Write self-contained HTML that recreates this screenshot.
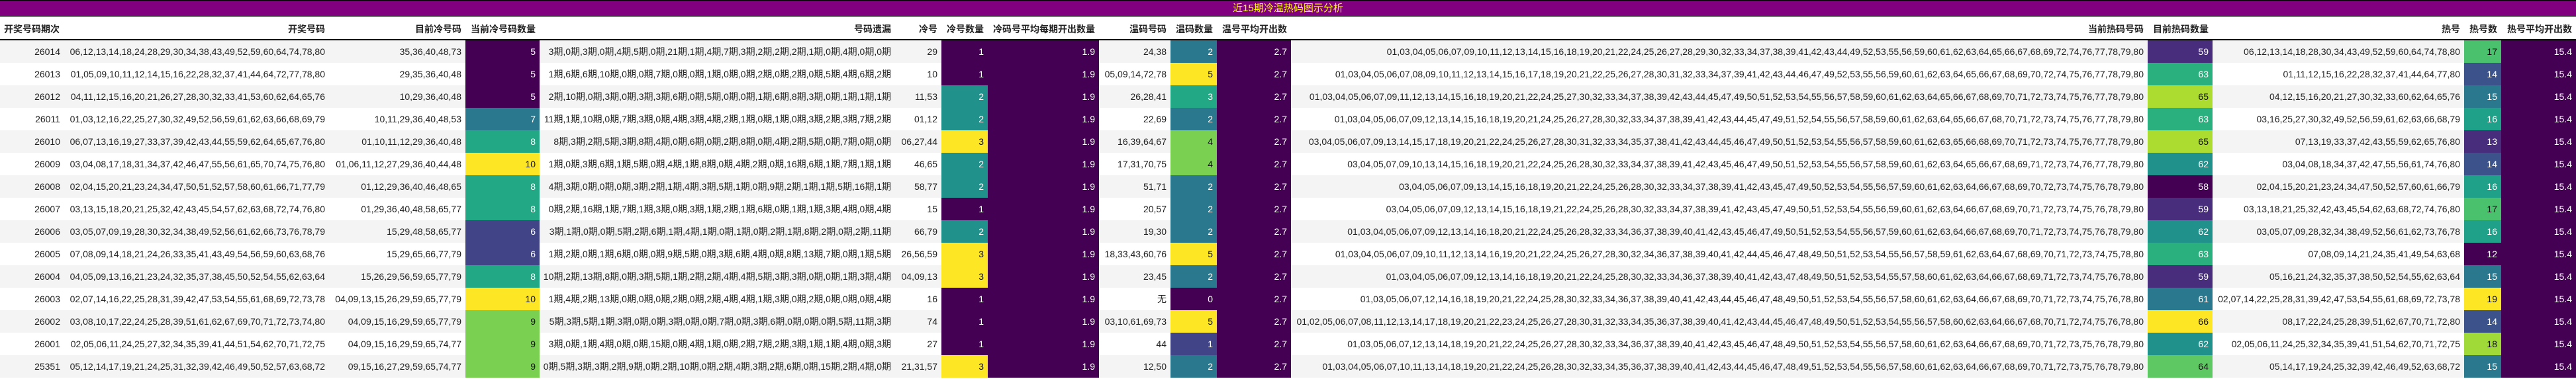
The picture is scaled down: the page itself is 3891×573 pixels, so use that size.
<!DOCTYPE html>
<html><head><meta charset="utf-8">
<style>
*{margin:0;padding:0;box-sizing:border-box}
body{width:3891px;height:573px;background:#fff;font-family:"Liberation Sans","Noto Sans CJK SC",sans-serif;font-size:14px;color:#222;overflow:hidden}
.t{height:25px;background:#800080;border-top:1px solid #000;border-bottom:1px solid #000;color:#ffff00;text-align:center;font-size:15px;line-height:23px}
.g{display:grid;grid-template-columns:97px 400px 206px 112px 537px 70px 70px 168px 108px 70px 112px 1294px 98px 380px 56px 113px}
.g>div{text-align:right;padding-right:6px;white-space:nowrap;overflow:visible}
.h{height:36px;border-bottom:2px solid #000}
.h>div{font-weight:bold;line-height:38px}
.h>div:first-child{text-align:left;padding-left:6px}
.r{height:34px}
.r>div{line-height:34px}
.r:nth-of-type(odd){background:#f4f4f4}
.r:nth-of-type(even){background:#fff}
.a{background:#440154;color:#fff}
.b{background:#414487;color:#fff}
.b2{background:#472d7b;color:#fff}
.c{background:#3b528b;color:#fff}
.d{background:#2a788e;color:#fff}
.e{background:#21918c;color:#fff}
.f{background:#22a884;color:#fff}
.f2{background:#2ab07f;color:#fff}
.f3{background:#1fa088;color:#fff}
.gg{background:#4ac16d;color:#111}
.h5{background:#5ec962;color:#111}
.i{background:#7ad151;color:#111}
.j{background:#a0da39;color:#111}
.k{background:#addc30;color:#111}
.y{background:#fde725;color:#111}
</style></head><body>
<div class="t">近15期冷温热码图示分析</div>
<div class="g h"><div>开奖号码期次</div><div>开奖号码</div><div>目前冷号码</div><div>当前冷号码数量</div><div>号码遗漏</div><div>冷号</div><div>冷号数量</div><div>冷码号平均每期开出数量</div><div>温码号码</div><div>温码数量</div><div>温号平均开出数</div><div>当前热码号码</div><div>目前热码数量</div><div>热号</div><div>热号数</div><div>热号平均开出数</div></div>
<div id="rows">
<div class="g r"><div>26014</div><div>06,12,13,14,18,24,28,29,30,34,38,43,49,52,59,60,64,74,78,80</div><div>35,36,40,48,73</div><div class="a">5</div><div>3期,0期,3期,0期,4期,5期,0期,21期,1期,4期,7期,3期,2期,2期,2期,1期,0期,4期,0期,0期</div><div>29</div><div class="a">1</div><div class="a">1.9</div><div>24,38</div><div class="d">2</div><div class="a">2.7</div><div>01,03,04,05,06,07,09,10,11,12,13,14,15,16,18,19,20,21,22,24,25,26,27,28,29,30,32,33,34,37,38,39,41,42,43,44,49,52,53,55,56,59,60,61,62,63,64,65,66,67,68,69,72,74,76,77,78,79,80</div><div class="b2">59</div><div>06,12,13,14,18,28,30,34,43,49,52,59,60,64,74,78,80</div><div class="gg">17</div><div class="a">15.4</div></div>
<div class="g r"><div>26013</div><div>01,05,09,10,11,12,14,15,16,22,28,32,37,41,44,64,72,77,78,80</div><div>29,35,36,40,48</div><div class="a">5</div><div>1期,6期,6期,10期,0期,0期,7期,0期,0期,1期,0期,0期,2期,0期,2期,0期,5期,4期,6期,2期</div><div>10</div><div class="a">1</div><div class="a">1.9</div><div>05,09,14,72,78</div><div class="y">5</div><div class="a">2.7</div><div>01,03,04,05,06,07,08,09,10,11,12,13,14,15,16,17,18,19,20,21,22,25,26,27,28,30,31,32,33,34,37,39,41,42,43,44,46,47,49,52,53,55,56,59,60,61,62,63,64,65,66,67,68,69,70,72,74,75,76,77,78,79,80</div><div class="f2">63</div><div>01,11,12,15,16,22,28,32,37,41,44,64,77,80</div><div class="c">14</div><div class="a">15.4</div></div>
<div class="g r"><div>26012</div><div>04,11,12,15,16,20,21,26,27,28,30,32,33,41,53,60,62,64,65,76</div><div>10,29,36,40,48</div><div class="a">5</div><div>2期,10期,0期,3期,0期,3期,3期,6期,0期,5期,0期,0期,1期,6期,8期,3期,0期,1期,1期,1期</div><div>11,53</div><div class="e">2</div><div class="a">1.9</div><div>26,28,41</div><div class="f">3</div><div class="a">2.7</div><div>01,03,04,05,06,07,09,11,12,13,14,15,16,18,19,20,21,22,24,25,27,30,32,33,34,37,38,39,42,43,44,45,47,49,50,51,52,53,54,55,56,57,58,59,60,61,62,63,64,65,66,67,68,69,70,71,72,73,74,75,76,77,78,79,80</div><div class="k">65</div><div>04,12,15,16,20,21,27,30,32,33,60,62,64,65,76</div><div class="d">15</div><div class="a">15.4</div></div>
<div class="g r"><div>26011</div><div>01,03,12,16,22,25,27,30,32,49,52,56,59,61,62,63,66,68,69,79</div><div>10,11,29,36,40,48,53</div><div class="d">7</div><div>11期,1期,10期,0期,7期,3期,0期,4期,3期,4期,2期,1期,0期,1期,0期,3期,2期,3期,7期,2期</div><div>01,12</div><div class="e">2</div><div class="a">1.9</div><div>22,69</div><div class="d">2</div><div class="a">2.7</div><div>01,03,04,05,06,07,09,12,13,14,15,16,18,19,20,21,24,25,26,27,28,30,32,33,34,37,38,39,41,42,43,44,45,47,49,51,52,54,55,56,57,58,59,60,61,62,63,64,65,66,67,68,70,71,72,73,74,75,76,77,78,79,80</div><div class="f2">63</div><div>03,16,25,27,30,32,49,52,56,59,61,62,63,66,68,79</div><div class="f3">16</div><div class="a">15.4</div></div>
<div class="g r"><div>26010</div><div>06,07,13,16,19,27,33,37,39,42,43,44,55,59,62,64,65,67,76,80</div><div>01,10,11,12,29,36,40,48</div><div class="f">8</div><div>8期,3期,2期,5期,3期,8期,4期,0期,6期,0期,2期,8期,0期,4期,2期,5期,0期,7期,0期,0期</div><div>06,27,44</div><div class="y">3</div><div class="a">1.9</div><div>16,39,64,67</div><div class="i">4</div><div class="a">2.7</div><div>03,04,05,06,07,09,13,14,15,17,18,19,20,21,22,24,25,26,27,28,30,31,32,33,34,35,37,38,41,42,43,44,45,46,47,49,50,51,52,53,54,55,56,57,58,59,60,61,62,63,65,66,68,69,70,71,72,73,74,75,76,77,78,79,80</div><div class="k">65</div><div>07,13,19,33,37,42,43,55,59,62,65,76,80</div><div class="b2">13</div><div class="a">15.4</div></div>
<div class="g r"><div>26009</div><div>03,04,08,17,18,31,34,37,42,46,47,55,56,61,65,70,74,75,76,80</div><div>01,06,11,12,27,29,36,40,44,48</div><div class="y">10</div><div>1期,0期,3期,6期,1期,5期,0期,4期,1期,8期,0期,4期,2期,0期,16期,6期,1期,7期,1期,1期</div><div>46,65</div><div class="e">2</div><div class="a">1.9</div><div>17,31,70,75</div><div class="i">4</div><div class="a">2.7</div><div>03,04,05,07,09,10,13,14,15,16,18,19,20,21,22,24,25,26,28,30,32,33,34,37,38,39,41,42,43,45,46,47,49,50,51,52,53,54,55,56,57,58,59,60,61,62,63,64,65,66,67,68,69,71,72,73,74,76,77,78,79,80</div><div class="e">62</div><div>03,04,08,18,34,37,42,47,55,56,61,74,76,80</div><div class="c">14</div><div class="a">15.4</div></div>
<div class="g r"><div>26008</div><div>02,04,15,20,21,23,24,34,47,50,51,52,57,58,60,61,66,71,77,79</div><div>01,12,29,36,40,46,48,65</div><div class="f">8</div><div>4期,3期,0期,0期,0期,3期,2期,1期,4期,3期,5期,1期,0期,9期,2期,1期,1期,5期,16期,1期</div><div>58,77</div><div class="e">2</div><div class="a">1.9</div><div>51,71</div><div class="d">2</div><div class="a">2.7</div><div>03,04,05,06,07,09,13,14,15,16,18,19,20,21,22,24,25,26,28,30,32,33,34,37,38,39,41,42,43,45,47,49,50,52,53,54,55,56,57,59,60,61,62,63,64,66,67,68,69,70,72,73,74,75,76,78,79,80</div><div class="a">58</div><div>02,04,15,20,21,23,24,34,47,50,52,57,60,61,66,79</div><div class="f3">16</div><div class="a">15.4</div></div>
<div class="g r"><div>26007</div><div>03,13,15,18,20,21,25,32,42,43,45,54,57,62,63,68,72,74,76,80</div><div>01,29,36,40,48,58,65,77</div><div class="f">8</div><div>0期,2期,16期,1期,7期,1期,3期,0期,3期,1期,2期,1期,6期,0期,1期,1期,3期,4期,0期,4期</div><div>15</div><div class="a">1</div><div class="a">1.9</div><div>20,57</div><div class="d">2</div><div class="a">2.7</div><div>03,04,05,06,07,09,12,13,14,15,16,18,19,21,22,24,25,26,28,30,32,33,34,37,38,39,41,42,43,45,47,49,50,51,52,53,54,55,56,59,60,61,62,63,64,66,67,68,69,70,71,72,73,74,75,76,78,79,80</div><div class="b2">59</div><div>03,13,18,21,25,32,42,43,45,54,62,63,68,72,74,76,80</div><div class="gg">17</div><div class="a">15.4</div></div>
<div class="g r"><div>26006</div><div>03,05,07,09,19,28,30,32,34,38,49,52,56,61,62,66,73,76,78,79</div><div>15,29,48,58,65,77</div><div class="b">6</div><div>3期,1期,0期,0期,5期,2期,6期,1期,4期,1期,0期,1期,0期,2期,1期,8期,2期,0期,2期,11期</div><div>66,79</div><div class="e">2</div><div class="a">1.9</div><div>19,30</div><div class="d">2</div><div class="a">2.7</div><div>01,03,04,05,06,07,09,12,13,14,16,18,20,21,22,24,25,26,28,32,33,34,36,37,38,39,40,41,42,43,45,46,47,49,50,51,52,53,54,55,56,57,59,60,61,62,63,64,66,67,68,69,70,71,72,73,74,75,76,78,79,80</div><div class="e">62</div><div>03,05,07,09,28,32,34,38,49,52,56,61,62,73,76,78</div><div class="f3">16</div><div class="a">15.4</div></div>
<div class="g r"><div>26005</div><div>07,08,09,14,18,21,24,26,33,35,41,43,49,54,56,59,60,63,68,76</div><div>15,29,65,66,77,79</div><div class="b">6</div><div>1期,2期,0期,1期,6期,0期,0期,9期,5期,0期,3期,6期,4期,0期,8期,13期,7期,0期,1期,5期</div><div>26,56,59</div><div class="y">3</div><div class="a">1.9</div><div>18,33,43,60,76</div><div class="y">5</div><div class="a">2.7</div><div>01,03,04,05,06,07,09,10,11,12,13,14,16,19,20,21,22,24,25,26,27,28,30,32,34,36,37,38,39,40,41,42,44,45,46,47,48,49,50,51,52,53,54,55,56,57,58,59,61,62,63,64,67,68,69,70,71,72,73,74,75,78,80</div><div class="f2">63</div><div>07,08,09,14,21,24,35,41,49,54,63,68</div><div class="a">12</div><div class="a">15.4</div></div>
<div class="g r"><div>26004</div><div>04,05,09,13,16,21,23,24,32,35,37,38,45,50,52,54,55,62,63,64</div><div>15,26,29,56,59,65,77,79</div><div class="f">8</div><div>10期,2期,13期,8期,0期,3期,5期,1期,2期,2期,4期,4期,5期,3期,3期,0期,0期,1期,3期,4期</div><div>04,09,13</div><div class="y">3</div><div class="a">1.9</div><div>23,45</div><div class="d">2</div><div class="a">2.7</div><div>01,03,04,05,06,07,09,12,13,14,16,18,19,20,21,22,24,25,28,30,32,33,34,36,37,38,39,40,41,42,43,47,48,49,50,51,52,53,54,55,57,58,60,61,62,63,64,66,67,68,69,71,72,73,74,75,76,78,80</div><div class="b2">59</div><div>05,16,21,24,32,35,37,38,50,52,54,55,62,63,64</div><div class="d">15</div><div class="a">15.4</div></div>
<div class="g r"><div>26003</div><div>02,07,14,16,22,25,28,31,39,42,47,53,54,55,61,68,69,72,73,78</div><div>04,09,13,15,26,29,59,65,77,79</div><div class="y">10</div><div>1期,4期,2期,13期,0期,0期,0期,2期,0期,2期,4期,4期,1期,3期,0期,2期,0期,0期,0期,4期</div><div>16</div><div class="a">1</div><div class="a">1.9</div><div>无</div><div class="a">0</div><div class="a">2.7</div><div>01,03,05,06,07,12,14,16,18,19,20,21,22,24,25,28,30,32,33,34,36,37,38,39,40,41,42,43,44,45,46,47,48,49,50,51,52,53,54,55,56,57,58,60,61,62,63,64,66,67,68,69,70,71,72,73,74,75,76,78,80</div><div class="d">61</div><div>02,07,14,22,25,28,31,39,42,47,53,54,55,61,68,69,72,73,78</div><div class="y">19</div><div class="a">15.4</div></div>
<div class="g r"><div>26002</div><div>03,08,10,17,22,24,25,28,39,51,61,62,67,69,70,71,72,73,74,80</div><div>04,09,15,16,29,59,65,77,79</div><div class="i">9</div><div>5期,3期,5期,1期,3期,0期,0期,3期,0期,0期,7期,0期,3期,6期,0期,0期,0期,5期,11期,3期</div><div>74</div><div class="a">1</div><div class="a">1.9</div><div>03,10,61,69,73</div><div class="y">5</div><div class="a">2.7</div><div>01,02,05,06,07,08,11,12,13,14,17,18,19,20,21,22,23,24,25,26,27,28,30,31,32,33,34,35,36,37,38,39,40,41,42,43,44,45,46,47,48,49,50,51,52,53,54,55,56,57,58,60,62,63,64,66,67,68,70,71,72,74,75,76,78,80</div><div class="y">66</div><div>08,17,22,24,25,28,39,51,62,67,70,71,72,80</div><div class="c">14</div><div class="a">15.4</div></div>
<div class="g r"><div>26001</div><div>02,05,06,11,24,25,27,32,34,35,39,41,44,51,54,62,70,71,72,75</div><div>04,09,15,16,29,59,65,74,77</div><div class="i">9</div><div>3期,0期,1期,4期,0期,0期,15期,0期,4期,1期,0期,2期,7期,2期,3期,1期,1期,4期,0期,3期</div><div>27</div><div class="a">1</div><div class="a">1.9</div><div>44</div><div class="b">1</div><div class="a">2.7</div><div>01,03,05,06,07,12,13,14,18,19,20,21,22,24,25,26,27,28,30,32,33,34,36,37,38,39,40,41,42,43,45,46,47,48,49,50,51,52,53,54,55,56,57,58,60,61,62,63,64,66,67,68,69,70,71,72,73,75,76,78,79,80</div><div class="e">62</div><div>02,05,06,11,24,25,32,34,35,39,41,51,54,62,70,71,72,75</div><div class="j">18</div><div class="a">15.4</div></div>
<div class="g r"><div>25351</div><div>05,12,14,17,19,21,24,25,31,32,39,42,46,49,50,52,57,63,68,72</div><div>09,15,16,27,29,59,65,74,77</div><div class="i">9</div><div>0期,5期,3期,3期,2期,9期,0期,2期,10期,0期,2期,4期,3期,2期,6期,0期,15期,2期,4期,0期</div><div>21,31,57</div><div class="y">3</div><div class="a">1.9</div><div>12,50</div><div class="d">2</div><div class="a">2.7</div><div>01,03,04,05,06,07,10,11,13,14,18,19,20,21,22,24,25,26,28,30,32,33,34,35,36,37,38,39,40,41,42,43,44,45,46,47,48,49,51,52,53,54,55,56,57,58,60,61,62,63,64,66,67,68,69,70,71,72,73,75,76,78,79,80</div><div class="h5">64</div><div>05,14,17,19,24,25,32,39,42,46,49,52,63,68,72</div><div class="d">15</div><div class="a">15.4</div></div>
</div>
</body></html>
